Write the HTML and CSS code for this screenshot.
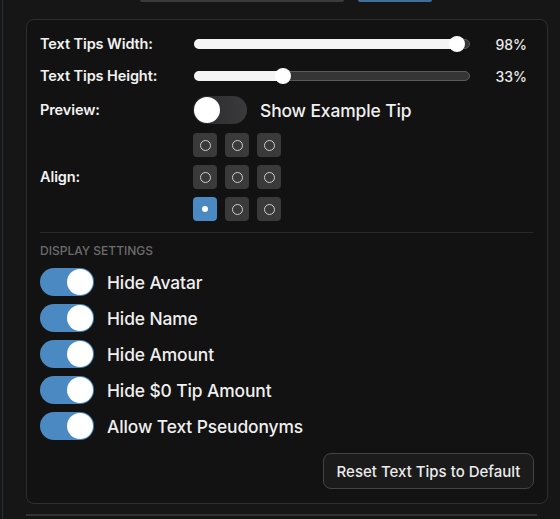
FILE: index.html
```html
<!DOCTYPE html>
<html>
<head>
<meta charset="utf-8">
<link rel="stylesheet" href="styles.css">
</head>
<body>
<div class="page">
  <div class="topbar">
    <div class="top-input"></div>
    <div class="top-btn"></div>
  </div>
  <div class="card">
    <div class="settings">
      <div class="label">Text Tips Width:</div>
      <div class="slider">
        <div class="track"></div>
        <div class="fill" style="width: calc(8px + (100% - 16px) * 0.98)"></div>
        <div class="thumb" style="left: calc((100% - 16px) * 0.98)"></div>
      </div>
      <div class="value">98%</div>

      <div class="label">Text Tips Height:</div>
      <div class="slider">
        <div class="track"></div>
        <div class="fill" style="width: calc(8px + (100% - 16px) * 0.31)"></div>
        <div class="thumb" style="left: calc((100% - 16px) * 0.31)"></div>
      </div>
      <div class="value">33%</div>

      <div class="label">Preview:</div>
      <div class="toggle-row wide">
        <div class="toggle off"><div class="knob"></div></div>
        <span class="toggle-text">Show Example Tip</span>
      </div>

      <div class="label align-label">Align:</div>
      <div class="align-grid">
        <div class="cell"><span class="ring"></span></div>
        <div class="cell"><span class="ring"></span></div>
        <div class="cell"><span class="ring"></span></div>
        <div class="cell"><span class="ring"></span></div>
        <div class="cell"><span class="ring"></span></div>
        <div class="cell"><span class="ring"></span></div>
        <div class="cell active"><span class="dot"></span></div>
        <div class="cell"><span class="ring"></span></div>
        <div class="cell"><span class="ring"></span></div>
      </div>
    </div>

    <div class="divider"></div>
    <div class="section-title">DISPLAY SETTINGS</div>

    <div class="toggles">
      <div class="toggle-row"><div class="toggle on"><div class="knob"></div></div><span class="toggle-text">Hide Avatar</span></div>
      <div class="toggle-row"><div class="toggle on"><div class="knob"></div></div><span class="toggle-text">Hide Name</span></div>
      <div class="toggle-row"><div class="toggle on"><div class="knob"></div></div><span class="toggle-text">Hide Amount</span></div>
      <div class="toggle-row"><div class="toggle on"><div class="knob"></div></div><span class="toggle-text">Hide $0 Tip Amount</span></div>
      <div class="toggle-row"><div class="toggle on"><div class="knob"></div></div><span class="toggle-text">Allow Text Pseudonyms</span></div>
    </div>

    <div class="actions">
      <button class="reset-btn">Reset Text Tips to Default</button>
    </div>
  </div>
  <div class="bottom-line"></div>
</div>
</body>
</html>
```
FILE: styles.css
```css
* { box-sizing: border-box; }
html, body {
  margin: 0;
  padding: 0;
  background: #161616;
  height: 100%;
}
body {
  font-family: "Inter", "DejaVu Sans", sans-serif;
  color: #ececec;
  overflow: hidden;
}
.page {
  margin-left: 2px;
  border-left: 1px solid #26303a;
  padding-left: 23px;
  padding-right: 12px;
  min-height: 519px;
}
.topbar {
  display: flex;
  gap: 14px;
  padding-left: 114px;
  height: 19px;
}
.top-input {
  width: 204px;
  height: 2px;
  background: #3a3a3a;
  border-radius: 0 0 3px 3px;
}
.top-btn {
  width: 74px;
  height: 2px;
  background: #3f6f98;
  border-radius: 0 0 3px 3px;
}
.card {
  width: 522px;
  background: #121212;
  border: 1px solid #2e2e2e;
  border-radius: 8px;
  padding: 12px 13px 14px 13px;
}
.settings {
  display: grid;
  grid-template-columns: 154px 276px 1fr;
  row-gap: 8px;
  align-items: center;
}
.label {
  font-size: 14.5px;
  font-weight: 600;
  color: #f2f2f2;
  letter-spacing: -0.1px;
  line-height: 24px;
}
.value {
  font-size: 14px;
  font-weight: 500;
  text-align: right;
  padding-right: 7px;
  color: #ececec;
}
.slider {
  position: relative;
  height: 24px;
}
.track {
  position: absolute;
  left: 0;
  right: 0;
  top: 7px;
  height: 10px;
  border-radius: 5px;
  background: #353535;
  border: 1px solid #5a5a5a;
}
.fill {
  position: absolute;
  left: 0;
  top: 7px;
  height: 10px;
  border-radius: 5px;
  background: #f4f4f4;
}
.thumb {
  position: absolute;
  top: 4px;
  width: 16px;
  height: 16px;
  border-radius: 50%;
  background: #ffffff;
}
.toggle-row {
  display: flex;
  align-items: center;
  gap: 13px;
}
.settings .toggle-row {
  grid-column: 2 / 4;
  margin-left: -1px;
}
.toggle {
  position: relative;
  width: 54px;
  height: 28px;
  border-radius: 14px;
  flex: none;
}
.toggle.on { background: #4a89c1; }
.toggle.off { background: linear-gradient(90deg, #2a2a2c, #3a3a3c); }
.knob {
  position: absolute;
  top: 1px;
  width: 26px;
  height: 26px;
  border-radius: 50%;
  background: #ffffff;
}
.toggle.on .knob { right: 1px; }
.toggle.off .knob { left: 1px; }
.toggle-text {
  font-size: 17.4px;
  font-weight: 500;
  color: #f0f0f0;
  letter-spacing: -0.1px;
}
.align-label { margin-top: 1px; }
.align-grid {
  margin-top: 1px;
  margin-left: -1px;
  display: grid;
  grid-template-columns: repeat(3, 24px);
  grid-auto-rows: 24px;
  gap: 8px;
}
.cell {
  width: 24px;
  height: 24px;
  background: #3a3a3a;
  border-radius: 4px;
  display: flex;
  align-items: center;
  justify-content: center;
}
.cell.active { background: #4a89c1; }
.ring {
  width: 11px;
  height: 11px;
  border-radius: 50%;
  border: 1.3px solid #cfcfcf;
}
.dot {
  width: 6px;
  height: 6px;
  border-radius: 50%;
  background: #ffffff;
}
.divider {
  margin-top: 11px;
  height: 1px;
  background: #2a2a2a;
  width: 493px;
}
.section-title {
  margin-top: 10px;
  font-size: 12px;
  font-weight: 500;
  color: #6c6c6c;
  line-height: 15px;
}
.toggles {
  margin-top: 10px;
  display: flex;
  flex-direction: column;
  gap: 8px;
}
.actions {
  display: flex;
  justify-content: flex-end;
  margin-top: 13px;
}
.reset-btn {
  font-family: "Inter", "DejaVu Sans", sans-serif;
  font-size: 15px;
  font-weight: 500;
  color: #ececec;
  background: #1b1b1b;
  border: 1px solid #444444;
  border-radius: 8px;
  height: 36px;
  width: 211px;
  padding: 0;
}
.bottom-line {
  margin-top: 10px;
  width: 511px;
  height: 2px;
  background: #333333;
}
```
